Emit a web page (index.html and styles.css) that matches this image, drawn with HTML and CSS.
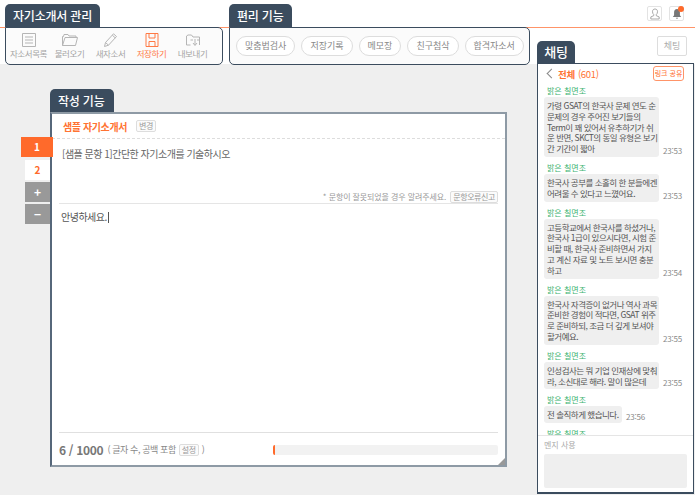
FILE: index.html
```html
<!DOCTYPE html>
<html lang="ko">
<head>
    <meta charset="UTF-8">
    <meta name="viewport" content="width=device-width, initial-scale=1.0">
    <title>자기소개서 관리</title>
    <link rel="stylesheet" href="styles.css">
</head>
<body>
    <div class="page">
        <div class="left-col">
            <div class="toolbars">
                <section class="toolgroup manage">
                    <h2 class="tab">자기소개서 관리</h2>
                    <div class="toolbox">
                        <a class="tool">
                            <svg viewBox="0 0 16 14" width="16" height="14"><path d="M1.500.5h13v13h-13zM4 4h8M4 7h8M4 10h8" fill="none" stroke="#b5b5b5"/></svg>
                            자소서목록
                        </a>
                        <a class="tool">
                            <svg viewBox="0 0 16 14" width="16" height="14"><path d="M.5 3.500v9h13l2-8H14V3H7L6 1.500H2L1.500 3.500zM14 4.500H3l-2.500 8" fill="none" stroke="#b5b5b5"/></svg>
                            불러오기
                        </a>
                        <a class="tool">
                            <svg viewBox="0 0 16 14" width="16" height="14"><path d="M1.500 13.500l1-4L10.500.8l3 2.700-8 8.700zM2.500 9.500l3 2.700M9.300 2.200l3 2.700" fill="none" stroke="#b5b5b5"/></svg>
                            새자소서
                        </a>
                        <a class="tool active">
                            <svg viewBox="0 0 16 14" width="16" height="14"><path d="M2 .5h12v13H2zM5 .5v4.500h6V.5M5 13.500V8.500h6v5" fill="none" stroke="#ff7a45"/></svg>
                            저장하기
                        </a>
                        <a class="tool">
                            <svg viewBox="0 0 16 14" width="16" height="14"><path d="M1.500 3v9h4M14.500 12V4H8L6.500 2H3L1.500 3M10 6v6M8 10l2 2.500 2-2.500M5.500 7H8M12 7h2" fill="none" stroke="#b5b5b5"/></svg>
                            내보내기
                        </a>
                    </div>
                </section>
                <section class="toolgroup helpers">
                    <h2 class="tab">편리 기능</h2>
                    <div class="toolbox pills">
                        <a class="pill">맞춤법검사</a>
                        <a class="pill">저장기록</a>
                        <a class="pill">메모장</a>
                        <a class="pill">친구첨삭</a>
                        <a class="pill">합격자소서</a>
                    </div>
                </section>
            </div>

            <div class="writing">
                <div class="rail">
                    <button class="rail-btn current">1</button>
                    <button class="rail-btn second">2</button>
                    <button class="rail-btn tool-btn">+</button>
                    <button class="rail-btn tool-btn">−</button>
                </div>
                <section class="editor">
                    <h2 class="tab">작성 기능</h2>
                    <div class="editor-box">
                        <div class="doc-title">
                            <strong>샘플 자기소개서</strong>
                            <span class="mini-btn">변경</span>
                        </div>
                        <div class="question">
                            <p>[샘플 문항 1]간단한 자기소개를 기술하시오</p>
                            <div class="report">
                                * 문항이 잘못되었을 경우 알려주세요.
                                <span class="mini-btn">문항오류신고</span>
                            </div>
                        </div>
                        <div class="answer">안녕하세요.<span class="caret"></span></div>
                        <div class="count-row">
                            <div class="count">
                                <b>6 / 1000</b>
                                <span>( 글자 수, 공백 포함</span>
                                <span class="mini-btn">설정</span>
                                <span>)</span>
                            </div>
                            <div class="progress"><div class="progress-fill" style="width: 2px"></div></div>
                        </div>
                        <div class="resize-grip"></div>
                    </div>
                </section>
            </div>
        </div>

        <aside class="chat">
            <div class="chat-top">
                <div class="top-icons">
                    <span class="icon-btn">
                        <svg viewBox="0 0 12 14" width="12" height="14"><path d="M6 1c2 0 3 1.300 3 3.300 0 1.500-.6 2.700-1.500 3.400v1.300l3.500 1.500V13H1v-2.500L4.500 9V7.700C3.600 7 3 5.800 3 4.300 3 2.300 4 1 6 1z" fill="none" stroke="#999"/></svg>
                    </span>
                    <span class="icon-btn bell">
                        <svg viewBox="0 0 12 14" width="12" height="14"><path d="M6 1c2.300 0 3.500 1.700 3.500 4v3.500L11 10.500H1L2.500 8.500V5C2.500 2.700 3.700 1 6 1zM4.500 11.500h3L6 13z" fill="#777"/></svg>
                        <i class="dot"></i>
                    </span>
                </div>
                <div class="chat-heading">
                    <h2 class="tab">채팅</h2>
                    <a class="chat-toggle">체팅</a>
                </div>
            </div>
            <div class="chat-box">
                <div class="chat-head">
                    <span class="back"></span>
                    <strong>전체</strong>
                    <span class="room-count">(601)</span>
                    <a class="share">링크 공유</a>
                </div>
                <div class="messages">
                    <div class="msg">
                        <div class="name">밝은 칠면조</div>
                        <div class="line">
                            <p class="bubble">가령 GSAT의 한국사 문제 연도 순<br>문제의 경우 주어진 보기들의<br>Term이 꽤 있어서 유추하기가 쉬<br>운 반면, SKCT의 동일 유형은 보기<br>간 기간이 짧아</p>
                            <time>23:53</time>
                        </div>
                    </div>
                    <div class="msg">
                        <div class="name">밝은 칠면조</div>
                        <div class="line">
                            <p class="bubble">한국사 공부를 소홀히 한 분들에겐<br>어려울 수 있다고 느꼈어요.</p>
                            <time>23:53</time>
                        </div>
                    </div>
                    <div class="msg">
                        <div class="name">밝은 칠면조</div>
                        <div class="line">
                            <p class="bubble">고등학교에서 한국사를 하셨거나,<br>한국사 1급이 있으시다면, 시험 준<br>비할 때, 한국사 준비하면서 가지<br>고 계신 자료 및 노트 보시면 충분<br>하고</p>
                            <time>23:54</time>
                        </div>
                    </div>
                    <div class="msg">
                        <div class="name">밝은 칠면조</div>
                        <div class="line">
                            <p class="bubble">한국사 자격증이 없거나 역사 과목<br>준비한 경험이 적다면, GSAT 위주<br>로 준비하되, 조금 더 깊게 보셔야<br>할거예요.</p>
                            <time>23:55</time>
                        </div>
                    </div>
                    <div class="msg">
                        <div class="name">밝은 칠면조</div>
                        <div class="line">
                            <p class="bubble">인성검사는 뭐 기업 인재상에 맞춰<br>라, 소신대로 해라. 말이 많은데</p>
                            <time>23:55</time>
                        </div>
                    </div>
                    <div class="msg">
                        <div class="name">밝은 칠면조</div>
                        <div class="line">
                            <p class="bubble short">전 솔직하게 했습니다.</p>
                            <time>23:56</time>
                        </div>
                    </div>
                    <div class="msg">
                        <div class="name">밝은 칠면조</div>
                    </div>
                </div>
                <div class="chat-input">
                    <label>멘지 사용</label>
                    <div class="input-area"></div>
                </div>
            </div>
        </aside>
    </div>
</body>
</html>
```

FILE: styles.css
```css
* {
    box-sizing: border-box;
}
html, body {
    margin: 0;
    padding: 0;
}
body {
    width: 695px;
    height: 495px;
    overflow: hidden;
    font-family: "Noto Sans CJK KR", "Noto Sans", sans-serif;
    color: #666;
    background: linear-gradient(#fff 27px, #ff9468 27px, #ff9468 28px, #fff 28px, #fff 64px, #efefef 64px);
}
h2, p {
    margin: 0;
    font-weight: normal;
}
.page {
    display: flex;
    height: 495px;
}
.left-col {
    width: 537px;
    flex: none;
}
.tab {
    background: #3b4c5e;
    color: #fff;
    font-size: 12px;
    font-weight: 500;
    line-height: 23px;
    letter-spacing: -0.2px;
    border-radius: 5px 5px 0 0;
    display: inline-block;
    vertical-align: top;
}

/* top toolbars */
.toolbars {
    display: flex;
    padding: 4px 0 0 5px;
    gap: 6px;
}
.toolgroup .tab {
    padding: 0 8px;
    display: block;
    width: max-content;
}
.toolbox {
    height: 38px;
    border: 1px solid #3b4c5e;
    border-radius: 0 5px 5px 5px;
    background: #fbfbfb;
    display: flex;
}
.manage .toolbox {
    width: 218px;
    padding: 5px 0 0 2px;
}
.helpers .toolbox {
    width: 301px;
    padding: 8px 0 0 6px;
    gap: 6px;
}
.tool {
    display: flex;
    flex-direction: column;
    align-items: center;
    width: 41px;
    font-size: 8.500px;
    line-height: 11px;
    letter-spacing: -0.4px;
    white-space: nowrap;
    color: #a5a5a5;
    gap: 1px;
}
.tool.active {
    color: #ff7a45;
}
.pill {
    height: 20px;
    padding: 0 8px;
    border: 1px solid #ddd;
    border-radius: 10px;
    background: #fff;
    font-size: 9px;
    line-height: 18px;
    color: #888;
    white-space: nowrap;
}

/* writing panel */
.writing {
    display: flex;
    padding: 24px 0 0 21px;
}
.rail {
    width: 29px;
    flex: none;
    padding-top: 48px;
    display: flex;
    flex-direction: column;
    align-items: flex-end;
    gap: 2px;
    position: relative;
    z-index: 1;
}
.rail-btn {
    width: 25px;
    height: 20px;
    margin: 0;
    padding: 0 0 2px;
    border: 0;
    font-family: inherit;
    font-size: 10px;
    font-weight: 700;
    background: #fff;
    color: #ff6a2b;
}
.rail-btn.current {
    width: 32px;
    margin-right: -3px;
    background: #ff6a2b;
    color: #fff;
    margin-bottom: 1px;
}
.rail-btn.tool-btn {
    background: #999;
    color: #fff;
    font-size: 12px;
}
.editor .tab {
    display: block;
    width: 64px;
    padding-left: 8px;
}
.editor-box {
    position: relative;
    width: 457px;
    height: 355px;
    background: #fff;
    border: 2px solid #8e9aa5;
    border-left-color: #56677a;
    display: flex;
    flex-direction: column;
    padding: 0 7px;
}
.doc-title {
    height: 25px;
    flex: none;
    border-bottom: 1px dashed #ddd;
    margin: 0 -7px;
    padding-left: 11px;
    display: flex;
    align-items: center;
    gap: 9px;
}
.doc-title strong {
    font-size: 10px;
    font-weight: 700;
    letter-spacing: -0.4px;
    color: #ff7333;
}
.mini-btn {
    display: inline-block;
    border: 1px solid #ddd;
    border-radius: 2px;
    padding: 0 2px;
    font-size: 8px;
    line-height: 10px;
    letter-spacing: -0.4px;
    color: #999;
    background: #fbfbfb;
}
.question {
    height: 65px;
    flex: none;
    border-bottom: 1px solid #e5e5e5;
    padding: 8px 0 0 3px;
    display: flex;
    flex-direction: column;
    justify-content: space-between;
}
.question p {
    font-size: 10px;
    line-height: 14px;
    letter-spacing: -0.5px;
    color: #666;
}
.report {
    text-align: right;
    font-size: 8px;
    line-height: 12px;
    letter-spacing: -0.1px;
    color: #999;
}
.report .mini-btn {
    margin-left: 2px;
}
.answer {
    flex: 1;
    padding: 6px 0 0 2px;
    font-size: 10px;
    line-height: 14px;
    letter-spacing: -0.5px;
    color: #555;
}
.caret {
    display: inline-block;
    width: 1px;
    height: 11px;
    background: #555;
    vertical-align: -2px;
    margin-left: 1px;
}
.count-row {
    flex: none;
    height: 34px;
    margin-bottom: -1px;
    border-top: 1px solid #e0e0e0;
    display: flex;
    align-items: center;
    justify-content: space-between;
}
.count {
    display: flex;
    align-items: center;
    gap: 3px;
    font-size: 9px;
    letter-spacing: -0.4px;
    color: #888;
}
.count b {
    font-size: 12px;
    font-weight: 700;
    letter-spacing: -0.3px;
    color: #777;
    margin-right: 1px;
}
.progress {
    width: 225px;
    height: 10px;
    background: #f2f2f2;
    border-radius: 2px;
    overflow: hidden;
}
.progress-fill {
    height: 100%;
    background: #ff6a2b;
}
.resize-grip {
    position: absolute;
    right: 0;
    bottom: 0;
    width: 0;
    height: 0;
    border-style: solid;
    border-width: 0 0 7px 7px;
    border-color: transparent transparent #999 transparent;
}

/* chat column */
.chat {
    flex: 1;
    display: flex;
    flex-direction: column;
    min-width: 0;
}
.chat-top {
    height: 63px;
    flex: none;
}
.top-icons {
    display: flex;
    justify-content: flex-end;
    gap: 7px;
    padding: 6px 11px 0 0;
}
.icon-btn {
    position: relative;
    width: 15px;
    height: 15px;
    border: 1px solid #e3e3e3;
    border-radius: 2px;
    display: flex;
    align-items: center;
    justify-content: center;
}
.icon-btn svg {
    width: 10px;
    height: 12px;
}
.dot {
    position: absolute;
    top: -1px;
    right: -1px;
    width: 6px;
    height: 6px;
    border-radius: 50%;
    background: #ff6a2b;
}
.chat-heading {
    display: flex;
    justify-content: space-between;
    align-items: flex-start;
    padding: 20px 8px 0 0;
}
.chat-heading .tab {
    width: 38px;
    height: 22px;
    line-height: 22px;
    text-align: center;
    font-size: 13px;
}
.chat-toggle {
    width: 30px;
    height: 20px;
    margin-top: -5px;
    border: 1px solid #ddd;
    border-radius: 2px;
    background: #fff;
    font-size: 9px;
    line-height: 18px;
    text-align: center;
    color: #aaa;
}
.chat-box {
    flex: 1;
    min-height: 0;
    margin: 0 1px 1px 0;
    border: 1px solid #3b4c5e;
    border-width: 1px 1px 2px 1px;
    background: #fff;
    display: flex;
    flex-direction: column;
}
.chat-head {
    flex: none;
    height: 19px;
    display: flex;
    align-items: center;
    padding: 0 9px 0 10px;
    gap: 3px;
    font-size: 9.500px;
    letter-spacing: -0.3px;
    color: #ff7333;
}
.chat-head strong {
    font-weight: 700;
}
.back {
    width: 7px;
    height: 7px;
    border-left: 1px solid #888;
    border-bottom: 1px solid #888;
    transform: rotate(45deg);
}
.share {
    margin-left: auto;
    width: 31px;
    height: 15px;
    border: 1px solid #ff9468;
    border-radius: 3px;
    font-size: 7px;
    line-height: 13px;
    letter-spacing: 0;
    text-align: center;
    white-space: nowrap;
    color: #ff6a2b;
}
.messages {
    flex: 1;
    min-height: 0;
    overflow: hidden;
    padding: 2px 0 0 6px;
}
.msg {
    margin-bottom: 5px;
}
.name {
    font-size: 8px;
    line-height: 11px;
    padding-left: 3px;
    color: #3cb371;
}
.line {
    display: flex;
    align-items: flex-end;
    gap: 4px;
    margin-top: 1px;
}
.bubble {
    width: 115px;
    flex: none;
    padding: 3px;
    background: #efefef;
    border-radius: 3px;
    font-size: 8.500px;
    line-height: 10.800px;
    letter-spacing: -0.5px;
    color: #555;
    white-space: nowrap;
}
.bubble.short {
    width: 78px;
}
time {
    font-size: 8px;
    line-height: 10px;
    letter-spacing: -0.2px;
    color: #888;
    margin-bottom: 1px;
}
.chat-input {
    flex: none;
    height: 57px;
    border-top: 1px solid #e5e5e5;
    padding: 2px 6px 0 6px;
}
.chat-input label {
    display: block;
    font-size: 8px;
    line-height: 13px;
    color: #aaa;
    margin-bottom: 3px;
}
.input-area {
    height: 34px;
    background: #efefef;
    border-radius: 2px;
}
```
